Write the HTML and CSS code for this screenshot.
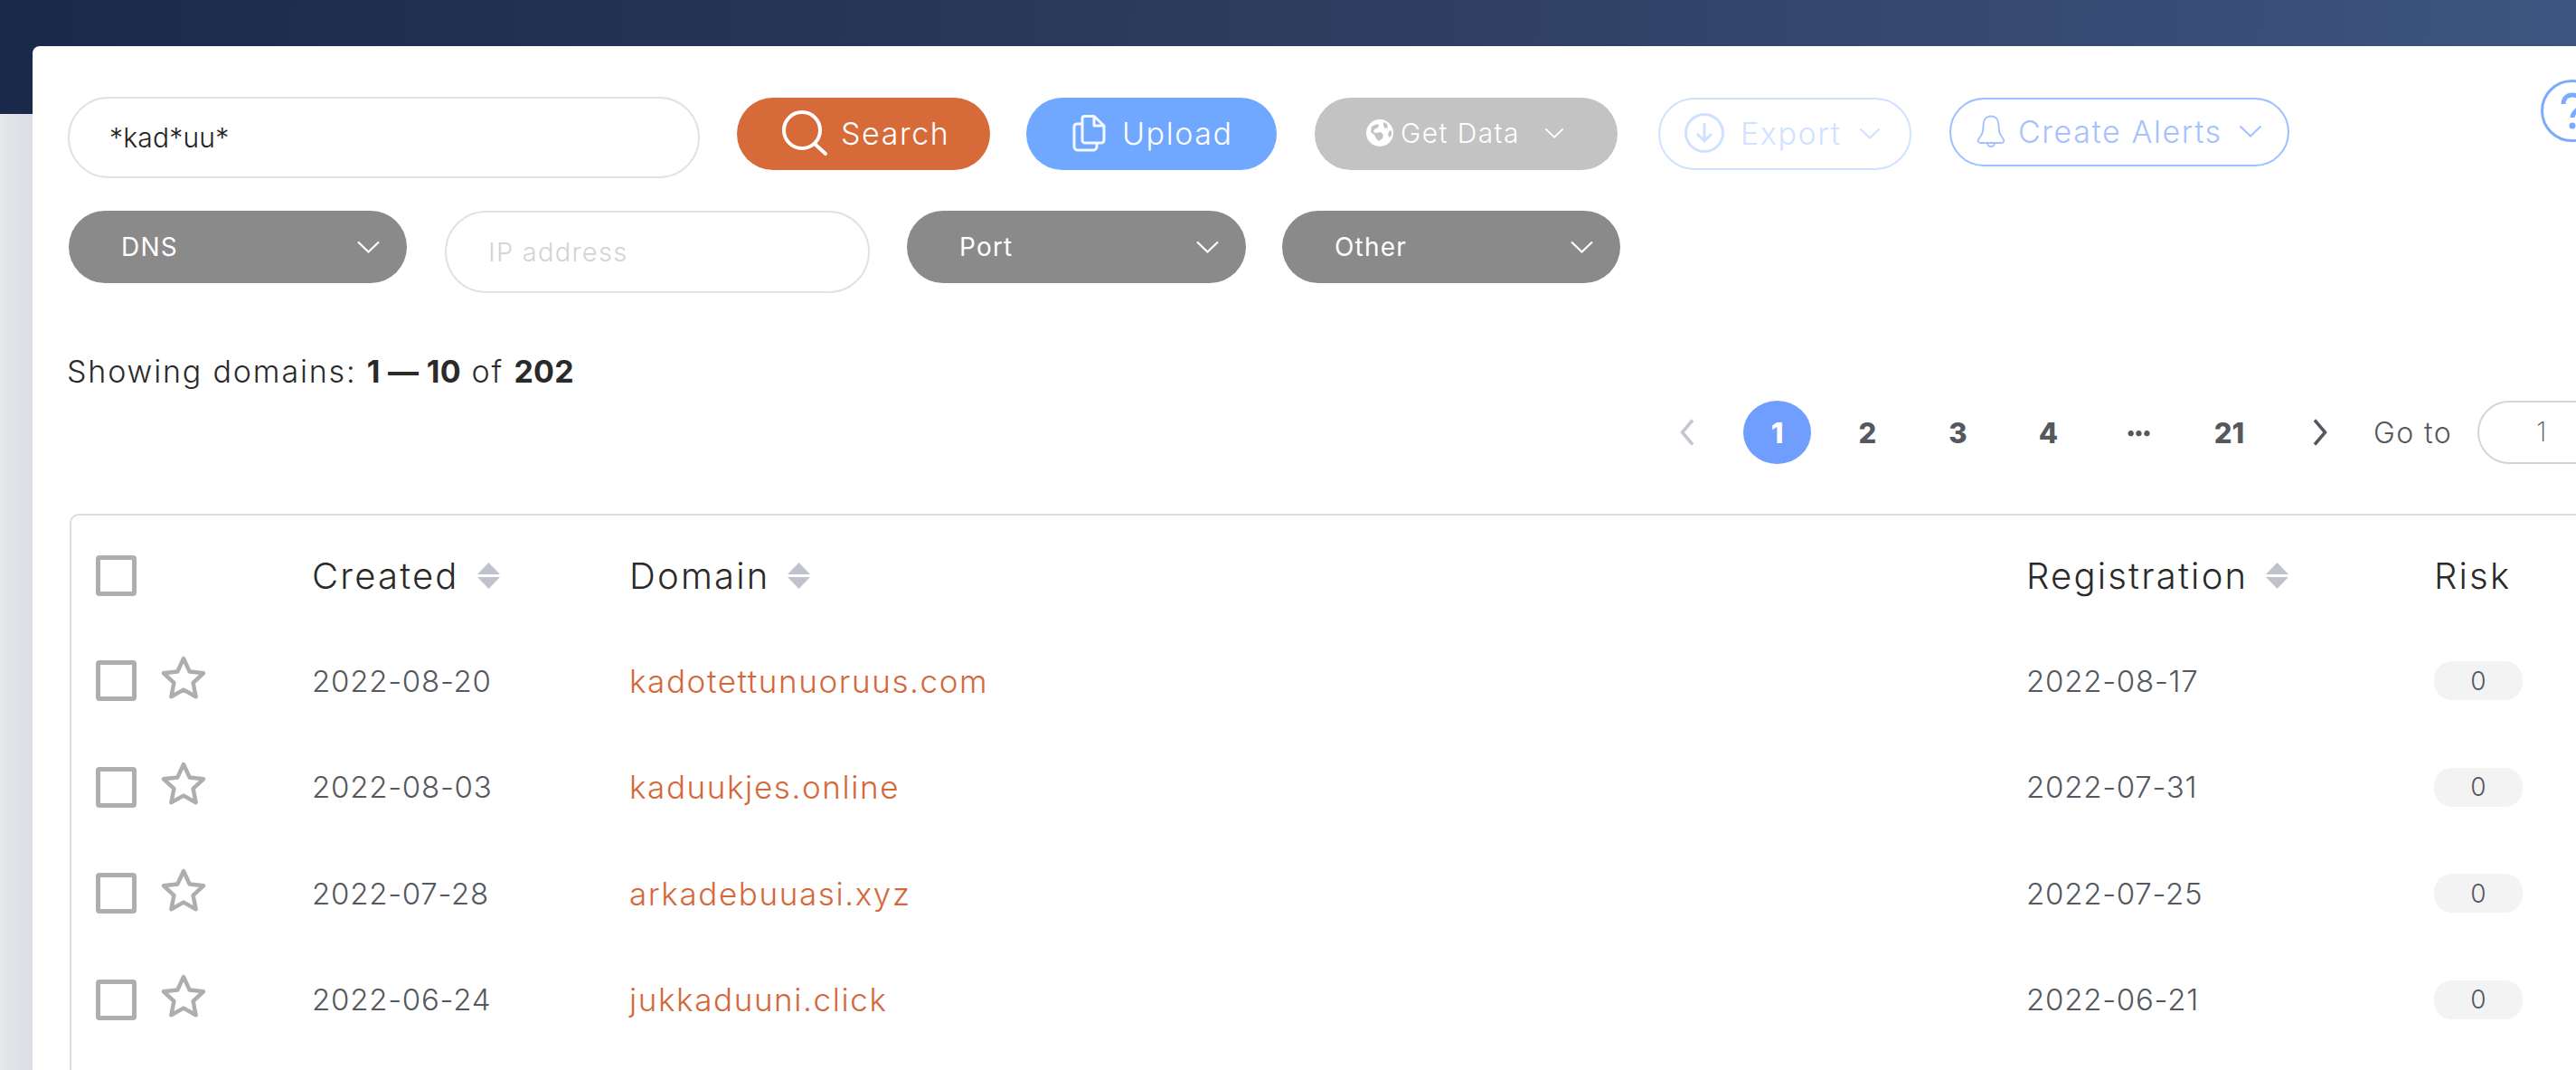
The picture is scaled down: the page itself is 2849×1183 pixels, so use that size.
FILE: index.html
```html
<!DOCTYPE html>
<html lang="en">
<head>
<meta charset="utf-8">
<title>Domains</title>
<link rel="stylesheet" href="styles.css">
</head>
<body>
<svg class="defs" width="0" height="0" aria-hidden="true">
  <symbol id="chev" viewBox="0 0 26 14"><path d="M1.5 1.5 13 12.5 24.5 1.5" fill="none" stroke="currentColor" stroke-width="2.2"/></symbol>
  <symbol id="star" viewBox="0 0 50 48"><path d="M25 3 31.6 17.4 47 19.3 35.6 29.9 38.6 45.2 25 37.6 11.4 45.2 14.4 29.9 3 19.3 18.4 17.4Z" fill="none" stroke="#aeaeae" stroke-width="4.5" stroke-linejoin="round"/></symbol>
  <symbol id="sort" viewBox="0 0 25 29"><path d="M12.5 0 25 13H0ZM0 16H25L12.5 29Z" fill="#c0c3cc"/></symbol>
</svg>
<header class="topbar"></header>
<main class="card">
  <div class="toolbar">
    <input class="field field-query" type="text" value="*kad*uu*" aria-label="Search query">
    <button class="btn btn-search">
      <svg class="ico-search" viewBox="0 0 52 52"><circle cx="22" cy="23" r="20" fill="none" stroke="#fff" stroke-width="4"/><path d="M36 38 48 49" stroke="#fff" stroke-width="4" stroke-linecap="round"/></svg>
      <span>Search</span>
    </button>
    <button class="btn btn-upload">
      <svg class="ico-upload" viewBox="0 0 37 41"><path d="M11 4a2.500 2.500 0 0 1 2.500-2.500H24L35 12v16a3 3 0 0 1-3 3H14a3 3 0 0 1-3-3ZM24 2v10h11M11 10H5a3 3 0 0 0-3 3v22a4 4 0 0 0 4 4h17a4 4 0 0 0 4-4v-4" fill="none" stroke="#fff" stroke-width="3" stroke-linejoin="round" opacity=".92"/></svg>
      <span>Upload</span>
    </button>
    <button class="btn btn-data">
      <svg class="ico-globe" viewBox="0 0 30 30"><circle cx="15" cy="15" r="15" fill="#fff"/><path d="M6 8c3-2 6-3 8-2l-1 3-4 2-1 3 3 1 5-1 3 3-1 4-4 3-3-3-2-4-4-3ZM19 3l4 2 1 4-3 1-2-3ZM26 12l2 1 0 5-3 2-1-4Z" fill="#c3c3c3"/></svg>
      <span>Get Data</span>
      <svg class="chev chev-data"><use href="#chev"/></svg>
    </button>
    <button class="btn btn-export">
      <svg class="ico-export" viewBox="0 0 44 44"><circle cx="22" cy="22" r="20.500" fill="none" stroke="#cfe1ff" stroke-width="3"/><path d="M22 11v20M14 23l8 8 8-8" fill="none" stroke="#cfe1ff" stroke-width="3"/></svg>
      <span>Export</span>
      <svg class="chev chev-export"><use href="#chev"/></svg>
    </button>
    <button class="btn btn-alerts">
      <svg class="ico-bell" viewBox="0 0 34 36"><path d="M17 1.500c-6 0-8.500 5-8.500 10 0 7-1 10-5 15-1.500 2-1 4.500 2 4.500h23c3 0 3.500-2.500 2-4.500-4-5-5-8-5-15 0-5-2.500-10-8.500-10ZM13 31c0 2.500 2 4 4 4s4-1.500 4-4" fill="none" stroke="#a6c1ff" stroke-width="2"/></svg>
      <span>Create Alerts</span>
      <svg class="chev chev-alerts"><use href="#chev"/></svg>
    </button>
    <svg class="ico-help" viewBox="0 0 69 69"><circle cx="34.500" cy="34.500" r="33" fill="none" stroke="#7aabff" stroke-width="3"/><path d="M25 27c0-6 4-10 10-10s10 4 10 9c0 7-10 8-10 16" fill="none" stroke="#7aabff" stroke-width="5"/><circle cx="35" cy="51" r="3.500" fill="#7aabff"/></svg>
  </div>
  <div class="filters">
    <button class="select select-dns"><span>DNS</span><svg class="chev chev-select"><use href="#chev"/></svg></button>
    <input class="field field-ip" type="text" placeholder="IP address" aria-label="IP address">
    <button class="select select-port"><span>Port</span><svg class="chev chev-select"><use href="#chev"/></svg></button>
    <button class="select select-other"><span>Other</span><svg class="chev chev-select"><use href="#chev"/></svg></button>
  </div>
  <p class="summary">Showing domains: <b>1 — 10</b> of <b>202</b></p>
  <nav class="pager">
    <span class="page arrow arrow-off"><svg viewBox="0 0 18 30"><path d="M15 1.500 3.500 15 15 28.500" fill="none" stroke="#c3c8d0" stroke-width="3.500"/></svg></span>
    <span class="page current">1</span>
    <span class="page">2</span>
    <span class="page">3</span>
    <span class="page">4</span>
    <span class="page dots">•••</span>
    <span class="page">21</span>
    <span class="page arrow"><svg viewBox="0 0 18 30"><path d="M3 1.500 14.500 15 3 28.500" fill="none" stroke="#55585e" stroke-width="3.500"/></svg></span>
    <span class="goto">Go to</span>
    <span class="goto-input">1</span>
  </nav>
  <section class="table">
    <div class="row head">
      <div class="c-check"><span class="box"></span></div>
      <div class="th">Created <svg class="sort"><use href="#sort"/></svg></div>
      <div class="th">Domain <svg class="sort"><use href="#sort"/></svg></div>
      <div class="th">Registration <svg class="sort"><use href="#sort"/></svg></div>
      <div class="th">Risk</div>
    </div>
    <div class="row">
      <div class="c-check"><span class="box"></span><svg class="star"><use href="#star"/></svg></div>
      <div class="date">2022-08-20</div><a class="domain">kadotettunuoruus.com</a><div class="date">2022-08-17</div><div><span class="risk">0</span></div>
    </div>
    <div class="row">
      <div class="c-check"><span class="box"></span><svg class="star"><use href="#star"/></svg></div>
      <div class="date">2022-08-03</div><a class="domain">kaduukjes.online</a><div class="date">2022-07-31</div><div><span class="risk">0</span></div>
    </div>
    <div class="row">
      <div class="c-check"><span class="box"></span><svg class="star"><use href="#star"/></svg></div>
      <div class="date">2022-07-28</div><a class="domain">arkadebuuasi.xyz</a><div class="date">2022-07-25</div><div><span class="risk">0</span></div>
    </div>
    <div class="row">
      <div class="c-check"><span class="box"></span><svg class="star"><use href="#star"/></svg></div>
      <div class="date">2022-06-24</div><a class="domain">jukkaduuni.click</a><div class="date">2022-06-21</div><div><span class="risk">0</span></div>
    </div>
  </section>
</main>
</body>
</html>
```
FILE: styles.css
```css
* { box-sizing: border-box; }
html, body { margin: 0; height: 1183px; overflow: hidden; }
body {
  width: 2849px;
  background: linear-gradient(90deg, #e6e7eb 0, #dcdde3 36px);
  font-family: Inter, "Liberation Sans", sans-serif;
  color: #2a2a2a;
}
.defs { position: absolute; }
.topbar {
  height: 126px;
  background: linear-gradient(92deg, #1a2849 0%, #2d3c5f 50%, #3d5580 100%);
}
.card {
  width: 2900px;
  height: 1132px;
  margin: -75px 0 0 36px;
  padding: 56px 0 0 39px;
  overflow: hidden;
  background: #fff;
  border-radius: 8px 0 0 0;
}
.toolbar { display: flex; align-items: flex-start; }
.filters { display: flex; align-items: flex-start; margin: 36px 0 0 1px; }
.field {
  display: block;
  border: 2px solid #e2e2e2;
  border-radius: 46px;
  background: #fff;
  font: 300 30px Inter, sans-serif;
  letter-spacing: .2px;
  color: #222;
  outline: none;
}
.field-query { width: 699px; height: 90px; padding: 0 0 0 44px; }
.field-ip { width: 470px; height: 91px; margin: 0 41px 0 42px; padding: 0 0 0 46px; font-size: 29px; letter-spacing: 1.300px; }
.field-ip::placeholder { color: #d3d3d3; opacity: 1; }
.btn {
  display: flex;
  align-items: center;
  height: 80px;
  margin: 1px 0 0;
  padding: 0 0 2px;
  border: 0;
  border-radius: 40px;
  font: 300 34px Inter, sans-serif;
  letter-spacing: 1.600px;
  color: #fff;
}
.btn-search { width: 280px; margin-left: 41px; padding-left: 50px; background: #d66a38; }
.ico-search { width: 52px; height: 52px; margin-right: 13px; }
.btn-upload { width: 277px; margin-left: 40px; padding-left: 51px; background: #70a7ff; }
.ico-upload { width: 37px; height: 41px; margin-right: 18px; }
.btn-data { width: 335px; margin-left: 42px; padding-left: 57px; background: #c3c3c3; font-size: 30px; letter-spacing: 1.400px; }
.ico-globe { width: 30px; height: 30px; margin-right: 8px; }
.chev { display: block; flex: none; color: #fff; }
.chev-data { width: 22px; height: 12px; margin-left: 27px; }
.btn-export { width: 280px; margin-left: 45px; padding-left: 27px; background: #fff; border: 2px solid #d0e2ff; color: #d0e2ff; }
.ico-export { width: 44px; height: 44px; margin-right: 18px; }
.chev-export { width: 26px; height: 13px; margin-left: 19px; color: #d0e2ff; }
.btn-alerts { width: 376px; height: 76px; margin-left: 42px; padding-left: 27px; background: #fff; border: 2px solid #9ac0ff; border-radius: 38px; color: #a6c1ff; }
.ico-bell { width: 34px; height: 36px; margin-right: 13px; }
.chev-alerts { width: 26px; height: 14px; margin-left: 18px; color: #a6c1ff; }
.ico-help { width: 69px; height: 69px; margin: -19px 0 0 278px; flex: none; }
.select {
  display: flex;
  align-items: center;
  justify-content: space-between;
  height: 80px;
  padding: 0 29px 0 58px;
  border: 0;
  border-radius: 40px;
  background: #8a8a8a;
  font: 400 28px Inter, sans-serif;
  letter-spacing: 1.200px;
  color: #fff;
}
.select-dns { width: 374px; }
.select-port { width: 375px; }
.select-other { width: 374px; margin-left: 40px; }
.chev-select { width: 27px; height: 14px; }
.summary {
  margin: 66px 0 0 -1px;
  font-size: 34px;
  font-weight: 300;
  letter-spacing: 1.850px;
  line-height: 42px;
}
.summary b { font-weight: 700; letter-spacing: .3px; }
.pager {
  display: flex;
  align-items: center;
  height: 70px;
  margin: 11px 0 0 1753px;
}
.page {
  display: flex;
  align-items: center;
  justify-content: center;
  flex: none;
  width: 75px;
  height: 70px;
  margin-right: 25px;
  border-radius: 50%;
  font-size: 31px;
  font-weight: 800;
  color: #55585e;
}
.current { background: #709eff; color: #fff; }
.dots { font-size: 20px; letter-spacing: 0; }
.arrow svg { width: 18px; height: 30px; }
.goto { margin-left: -3px; font-size: 32px; font-weight: 300; letter-spacing: 1.400px; color: #55585e; white-space: nowrap; }
.goto-input {
  flex: none;
  width: 160px;
  height: 70px;
  margin-left: 28px;
  padding: 14px 0 0 63px;
  border: 2px solid #d5d5d5;
  border-radius: 35px;
  font-size: 30px;
  font-weight: 200;
  color: #55585e;
}
.table {
  height: 700px;
  margin: 55px 0 0 2px;
  padding-top: 8px;
  border: solid #dcdcdc;
  border-width: 2px 2px 0;
  border-radius: 10px 0 0 0;
}
.row {
  display: grid;
  grid-template-columns: 266px 351px 1545px 451px 1fr;
  align-items: center;
  height: 117.500px;
}
.head { height: 116px; }
.c-check { display: flex; align-items: center; padding-left: 27px; }
.box { display: block; width: 45px; height: 45px; border: 5px solid #aeaeae; border-radius: 4px; }
.star { width: 50px; height: 48px; margin: -8px 0 0 27px; }
.th { display: flex; align-items: center; font-size: 40px; font-weight: 300; letter-spacing: 2.200px; color: #2a2a2a; }
.sort { width: 25px; height: 29px; margin-left: 20px; }
.date { font-size: 33px; font-weight: 300; letter-spacing: .75px; color: #55585e; }
.domain { font-size: 35px; font-weight: 300; letter-spacing: 1.600px; color: #d5683a; }
.risk {
  display: flex;
  align-items: center;
  justify-content: center;
  width: 98px;
  height: 43px;
  border-radius: 20px;
  background: #f3f3f3;
  font-size: 28px;
  font-weight: 300;
  color: #55585e;
}
```
